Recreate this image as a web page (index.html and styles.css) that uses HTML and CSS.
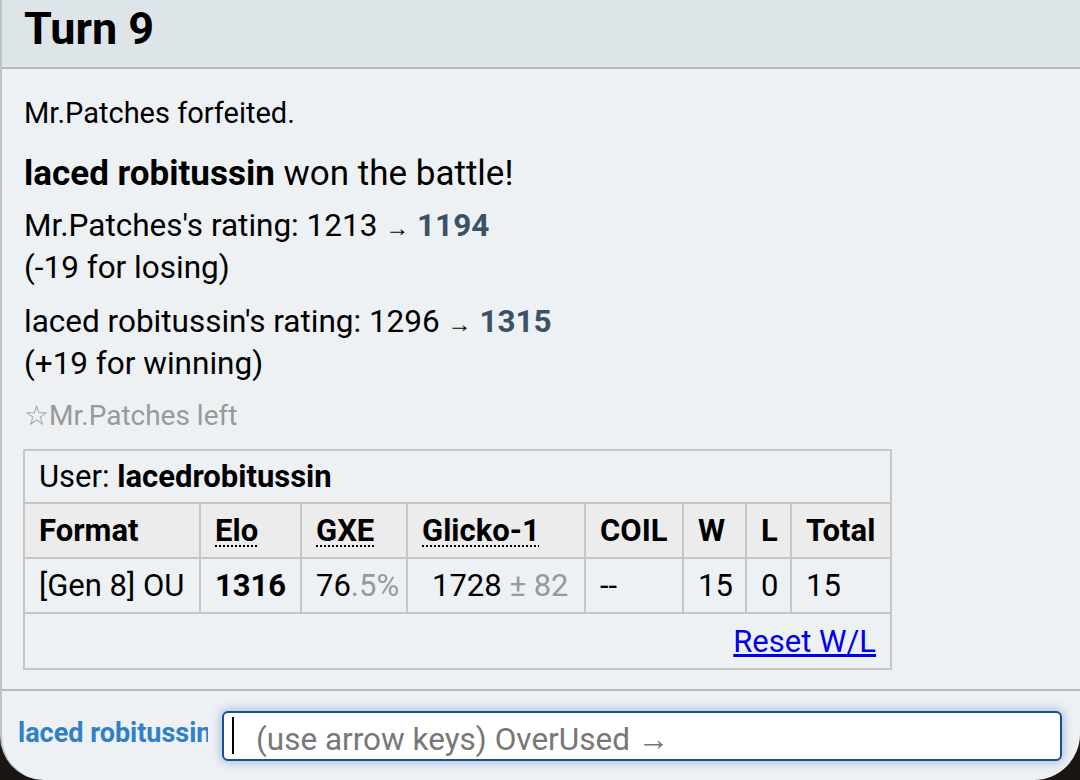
FILE: index.html
```html
<!DOCTYPE html>
<html lang="en">
<head>
    <meta charset="UTF-8">
    <title>Battle log</title>
    <link rel="stylesheet" href="styles.css">
</head>
<body>
    <div class="screen">
        <div class="battle-log">
            <h2 class="turn">Turn 9</h2>
            <div class="log-body">
                <p class="line forfeit">Mr.Patches forfeited.</p>
                <p class="line big"><strong>laced robitussin</strong> won the battle!</p>
                <p class="line rating">Mr.Patches's rating: 1213 <span class="arrow">&rarr;</span> <strong>1194</strong><br>(-19 for losing)</p>
                <p class="line rating">laced robitussin's rating: 1296 <span class="arrow">&rarr;</span> <strong>1315</strong><br>(+19 for winning)</p>
                <p class="line left">&#9734;Mr.Patches left</p>

                <table class="ladder">
                    <colgroup>
                        <col style="width: 176px">
                        <col style="width: 101px">
                        <col style="width: 106px">
                        <col style="width: 178px">
                        <col style="width: 98px">
                        <col style="width: 63px">
                        <col style="width: 45px">
                        <col style="width: 100px">
                    </colgroup>
                    <tr>
                        <td colspan="8" class="user">User: <strong>lacedrobitussin</strong></td>
                    </tr>
                    <tr class="head">
                        <th>Format</th>
                        <th><abbr>Elo</abbr></th>
                        <th><abbr>GXE</abbr></th>
                        <th><abbr>Glicko-1</abbr></th>
                        <th>COIL</th>
                        <th>W</th>
                        <th>L</th>
                        <th>Total</th>
                    </tr>
                    <tr>
                        <td>[Gen 8] OU</td>
                        <td><strong>1316</strong></td>
                        <td>76<span class="dim">.5%</span></td>
                        <td class="glicko">1728<span class="dim"> &plusmn; 82</span></td>
                        <td>--</td>
                        <td>15</td>
                        <td>0</td>
                        <td>15</td>
                    </tr>
                    <tr>
                        <td colspan="8" class="reset"><a href="#">Reset W/L</a></td>
                    </tr>
                </table>
            </div>
        </div>

        <div class="chat-bar">
            <div class="chat-name">laced robitussin</div>
            <div class="chat-input">
                <span class="caret"></span>
                <span class="placeholder">(use arrow keys) OverUsed &rarr;</span>
            </div>
        </div>
    </div>
</body>
</html>
```

FILE: styles.css
```css
html, body {
    margin: 0;
    height: 100%;
    background-color: #1a1613;
}
body {
    font-family: Roboto, "Liberation Sans", sans-serif;
    color: #000;
}
.screen {
    height: 780px;
    background-color: #edf1f4;
    border-left: 2px solid #bfc3c6;
    border-radius: 0 0 46px 44px;
    overflow: hidden;
    display: flex;
    flex-direction: column;
    box-sizing: border-box;
}
.battle-log {
    flex: 1;
}
.turn {
    margin: 0;
    height: 69px;
    box-sizing: border-box;
    padding: 1px 0 0 22px;
    font-size: 45px;
    font-weight: bold;
    line-height: 56px;
    background-color: #dee5e9;
    border-bottom: 2px solid #b8bbbd;
}
.log-body {
    padding: 25px 0 0 22px;
}
.line {
    margin: 0;
}
.forfeit {
    font-size: 29px;
    line-height: 38px;
}
.big {
    font-size: 35px;
    line-height: 44px;
    margin-top: 20px;
}
.rating {
    font-size: 31.5px;
    line-height: 39px;
    margin-top: 10px;
}
.rating + .rating {
    margin-top: 15px;
}
.rating strong {
    color: #3b5166;
}
.arrow {
    font-size: 24px;
}
.left {
    font-size: 28px;
    line-height: 36px;
    color: #999;
    margin-top: 15px;
    margin-bottom: 15px;
}
.ladder {
    table-layout: fixed;
    width: 867px;
    margin-left: -1px;
    border-collapse: collapse;
    border: 2px solid #c6c6c6;
    font-size: 31px;
}
.ladder td, .ladder th {
    border: 2px solid #c6c6c6;
    height: 53px;
    padding: 0 0 0 14px;
    text-align: left;
    white-space: nowrap;
}
.ladder .user {
    height: 51px;
}
.ladder .head th {
    background-color: #ececec;
    font-weight: bold;
}
.ladder abbr {
    text-decoration: underline dotted 2px;
    text-underline-offset: 4px;
}
.ladder .glicko {
    padding-left: 24px;
}
.dim {
    color: #999;
}
.ladder .reset {
    text-align: right;
    padding-right: 14px;
    height: 54px;
}
.reset a {
    color: #0000ee;
}
.chat-bar {
    height: 91px;
    border-top: 2px solid #b8bbbd;
    display: flex;
    align-items: center;
    padding-left: 16px;
    box-sizing: border-box;
}
.chat-name {
    width: 190px;
    flex-shrink: 0;
    overflow: hidden;
    white-space: nowrap;
    font-size: 27px;
    font-weight: bold;
    color: #2f80c6;
    margin-right: 14px;
    margin-bottom: 6px;
}
.chat-input {
    width: 840px;
    height: 50px;
    box-sizing: border-box;
    background: #fff;
    border: 2px solid #1c4f8f;
    border-radius: 6px;
    box-shadow: 0 0 10px 2px rgba(90, 140, 200, 0.45);
    display: flex;
    align-items: center;
    padding-left: 8px;
}
.caret {
    width: 2px;
    height: 37px;
    background: #000;
    margin-right: 22px;
    flex-shrink: 0;
}
.placeholder {
    font-size: 31.5px;
    color: #777;
    white-space: nowrap;
    margin-top: 8px;
}
```
